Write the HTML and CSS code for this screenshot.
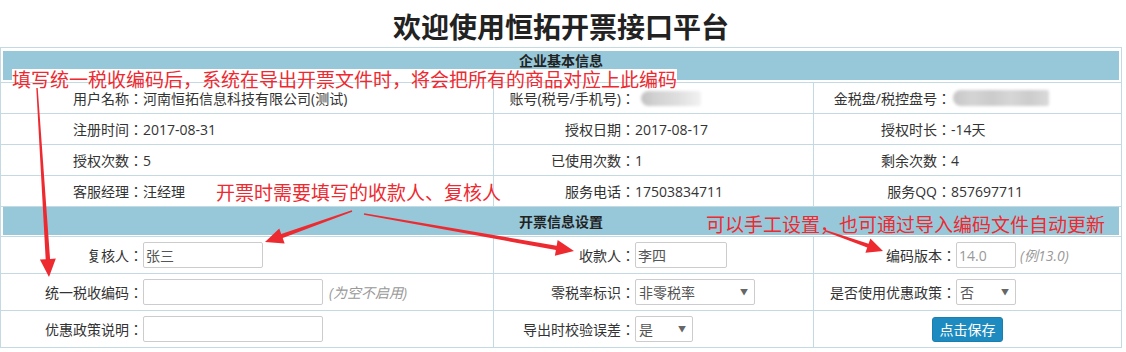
FILE: index.html
```html
<!DOCTYPE html>
<html lang="zh-CN">
<head>
<meta charset="utf-8">
<title>欢迎使用恒拓开票接口平台</title>
<link rel="stylesheet" href="styles.css">
</head>
<body>
<div class="page">
  <h1 class="title">欢迎使用恒拓开票接口平台</h1>
  <div class="panel">
    <div class="section-head head1">企业基本信息</div>
    <div class="info">
      <div class="row">
        <div class="cell c1"><span class="lbl">用户名称：</span><span class="val">河南恒拓信息科技有限公司(测试)</span></div>
        <div class="cell c2"><span class="lbl">账号(税号/手机号)：</span><span class="redact redact-a"></span></div>
        <div class="cell c3"><span class="lbl">金税盘/税控盘号：</span><span class="redact redact-b"></span></div>
      </div>
      <div class="row">
        <div class="cell c1"><span class="lbl">注册时间：</span><span class="val">2017-08-31</span></div>
        <div class="cell c2"><span class="lbl">授权日期：</span><span class="val">2017-08-17</span></div>
        <div class="cell c3"><span class="lbl">授权时长：</span><span class="val">-14天</span></div>
      </div>
      <div class="row">
        <div class="cell c1"><span class="lbl">授权次数：</span><span class="val">5</span></div>
        <div class="cell c2"><span class="lbl">已使用次数：</span><span class="val">1</span></div>
        <div class="cell c3"><span class="lbl">剩余次数：</span><span class="val">4</span></div>
      </div>
      <div class="row">
        <div class="cell c1"><span class="lbl">客服经理：</span><span class="val">汪经理</span></div>
        <div class="cell c2"><span class="lbl">服务电话：</span><span class="val">17503834711</span></div>
        <div class="cell c3"><span class="lbl">服务QQ：</span><span class="val">857697711</span></div>
      </div>
    </div>
    <div class="section-head head2">开票信息设置</div>
    <div class="form">
      <div class="row">
        <div class="cell c1"><span class="lbl">复核人：</span><input class="inp w120" type="text" value="张三"></div>
        <div class="cell c2"><span class="lbl">收款人：</span><input class="inp w92" type="text" value="李四"></div>
        <div class="cell c3"><span class="lbl">编码版本：</span><input class="inp w60 muted" type="text" value="14.0" readonly><span class="hint hint-b">(例13.0)</span></div>
      </div>
      <div class="row">
        <div class="cell c1"><span class="lbl">统一税收编码：</span><input class="inp w180" type="text" value=""><span class="hint">(为空不启用)</span></div>
        <div class="cell c2"><span class="lbl">零税率标识：</span><span class="sel w120"><select><option>非零税率</option></select></span></div>
        <div class="cell c3"><span class="lbl">是否使用优惠政策：</span><span class="sel w60"><select><option>否</option></select></span></div>
      </div>
      <div class="row">
        <div class="cell c1"><span class="lbl">优惠政策说明：</span><input class="inp w180" type="text" value=""></div>
        <div class="cell c2"><span class="lbl">导出时校验误差：</span><span class="sel w58"><select><option>是</option></select></span></div>
        <div class="cell c3 center"><button class="btn" type="button">点击保存</button></div>
      </div>
    </div>
  </div>

  <div class="note note-1">填写统一税收编码后，系统在导出开票文件时，将会把所有的商品对应上此编码</div>
  <div class="note note-2">开票时需要填写的收款人、复核人</div>
  <div class="note note-3">可以手工设置，也可通过导入编码文件自动更新</div>

  <svg class="arrows" width="1126" height="352" viewBox="0 0 1126 352" aria-hidden="true">
    <polygon points="36.3,88.04 45.66,259.18 39.88,259.55 49,277 55.84,258.53 50.06,258.9 37.7,87.96"/>
    <polygon points="351.77,210.34 281.22,233.89 279.27,228.42 265,242 284.65,243.5 282.7,238.03 352.23,211.66"/>
    <polygon points="363.88,214.69 555.89,250.05 554.88,255.76 574,251 557.66,240 556.65,245.71 364.12,213.31"/>
    <polygon points="825.77,231.66 867.24,247.59 865.42,252.78 883,251 870.38,238.62 868.56,243.81 826.23,230.34"/>
  </svg>
</div>
</body>
</html>
```

FILE: styles.css
```css
* { box-sizing: border-box; }

body {
  margin: 0;
  background: #fff;
  color: #333;
  font-family: "Open Sans", "Noto Sans CJK SC", sans-serif;
  font-size: 14px;
}

.page {
  position: relative;
  width: 1122px;
  height: 352px;
}

.title {
  margin: 0;
  height: 47px;
  padding-top: 6px;
  line-height: 40px;
  font-family: "Noto Sans CJK SC", sans-serif;
  font-size: 28px;
  font-weight: bold;
  color: #222;
  text-align: center;
}

.panel {
  border: 1px solid #c3dae3;
}

.section-head {
  margin: 3px 2px 2px;
  height: 29px;
  line-height: 29px;
  background: #96c8da;
  color: #222;
  font-family: "Noto Sans CJK SC", sans-serif;
  font-size: 14px;
  font-weight: bold;
  text-align: center;
}

.head1 {
  line-height: 19px;
}

.head2 {
  margin: 0;
  border-top: 1px solid #c3dae3;
  height: 30px;
  border-bottom: 1px solid #fff;
  padding: 0 2px;
  background: linear-gradient(#96c8da, #96c8da) content-box;
  line-height: 29px;
}

.row {
  display: grid;
  grid-template-columns: 492px 320px 1fr;
  height: 31px;
  border-top: 1px solid #c3dae3;
}

.form .row {
  height: 37px;
}

.cell {
  display: flex;
  align-items: center;
  white-space: nowrap;
}

.cell + .cell {
  border-left: 1px solid #c3dae3;
}

.center {
  justify-content: center;
}

.lbl {
  flex: none;
  width: 142px;
  text-align: right;
  font-family: "Open Sans", "Noto Sans CJK JP", "Noto Sans CJK SC", sans-serif;
  font-feature-settings: "locl" 0;
}

.c2 .lbl { width: 141px; }
.c3 .lbl { width: 137px; }
.form .c3 .lbl { width: 142px; }

.redact {
  display: inline-block;
  height: 15px;
  filter: blur(1.6px);
}

.redact-a {
  width: 60px;
  margin-left: 6px;
  border-radius: 8px 3px 3px 8px;
  background: linear-gradient(90deg, #c2c2c2 0, #d2d2d2 25%, #dedede 60%, #f2f2f2 100%);
}

.redact-b {
  width: 96px;
  height: 16px;
  margin-left: 2px;
  border-radius: 8px 2px 2px 8px;
  background: linear-gradient(90deg, #c6c6c6 0, #d4d4d4 20%, #cbcbcb 40%, #d6d6d6 60%, #cccccc 80%, #dadada 100%);
}

.inp {
  height: 26px;
  margin: 0;
  padding: 0 2px;
  border: 1px solid #ccc;
  border-radius: 2px;
  background: #fff;
  color: #555;
  font-family: inherit;
  font-size: 14px;
  outline: none;
}

.muted { color: #999; }

.w58 { width: 58px; }
.w60 { width: 60px; }
.w92 { width: 92px; }
.w120 { width: 120px; }
.w180 { width: 180px; }

.hint {
  margin-left: 6px;
  color: #999;
  font-style: italic;
}

.hint-b { margin-left: 4px; }

.sel {
  position: relative;
  display: inline-block;
  height: 26px;
}

.sel select {
  width: 100%;
  height: 26px;
  margin: 0;
  padding: 0 0 0 3px;
  border: 1px solid #ccc;
  border-radius: 2px;
  background: #fff;
  color: #555;
  font-family: inherit;
  font-size: 14px;
  appearance: none;
  -webkit-appearance: none;
}

.sel::after {
  content: "▼";
  position: absolute;
  right: 7px;
  top: 8px;
  font-size: 8px;
  line-height: 10px;
  color: #666;
  pointer-events: none;
}

.btn {
  width: 71px;
  height: 25px;
  padding: 0;
  border: 1px solid #1a7fae;
  border-radius: 3px;
  background: #1e8bc0;
  color: #fff;
  font-family: inherit;
  font-size: 14px;
}

.note {
  position: absolute;
  font-family: "Noto Sans CJK SC", sans-serif;
  font-size: 19px;
  line-height: 19px;
  color: #ee2a31;
  white-space: nowrap;
}

.note-1 {
  left: 12px;
  top: 69px;
  background: linear-gradient(#fff, #fff) top left / 100% 12px no-repeat;
}

.note-2 { left: 216px; top: 182px; }
.note-3 { left: 706px; top: 214px; }

.arrows {
  position: absolute;
  left: 0;
  top: 0;
  fill: #ee2a31;
  pointer-events: none;
}
```
